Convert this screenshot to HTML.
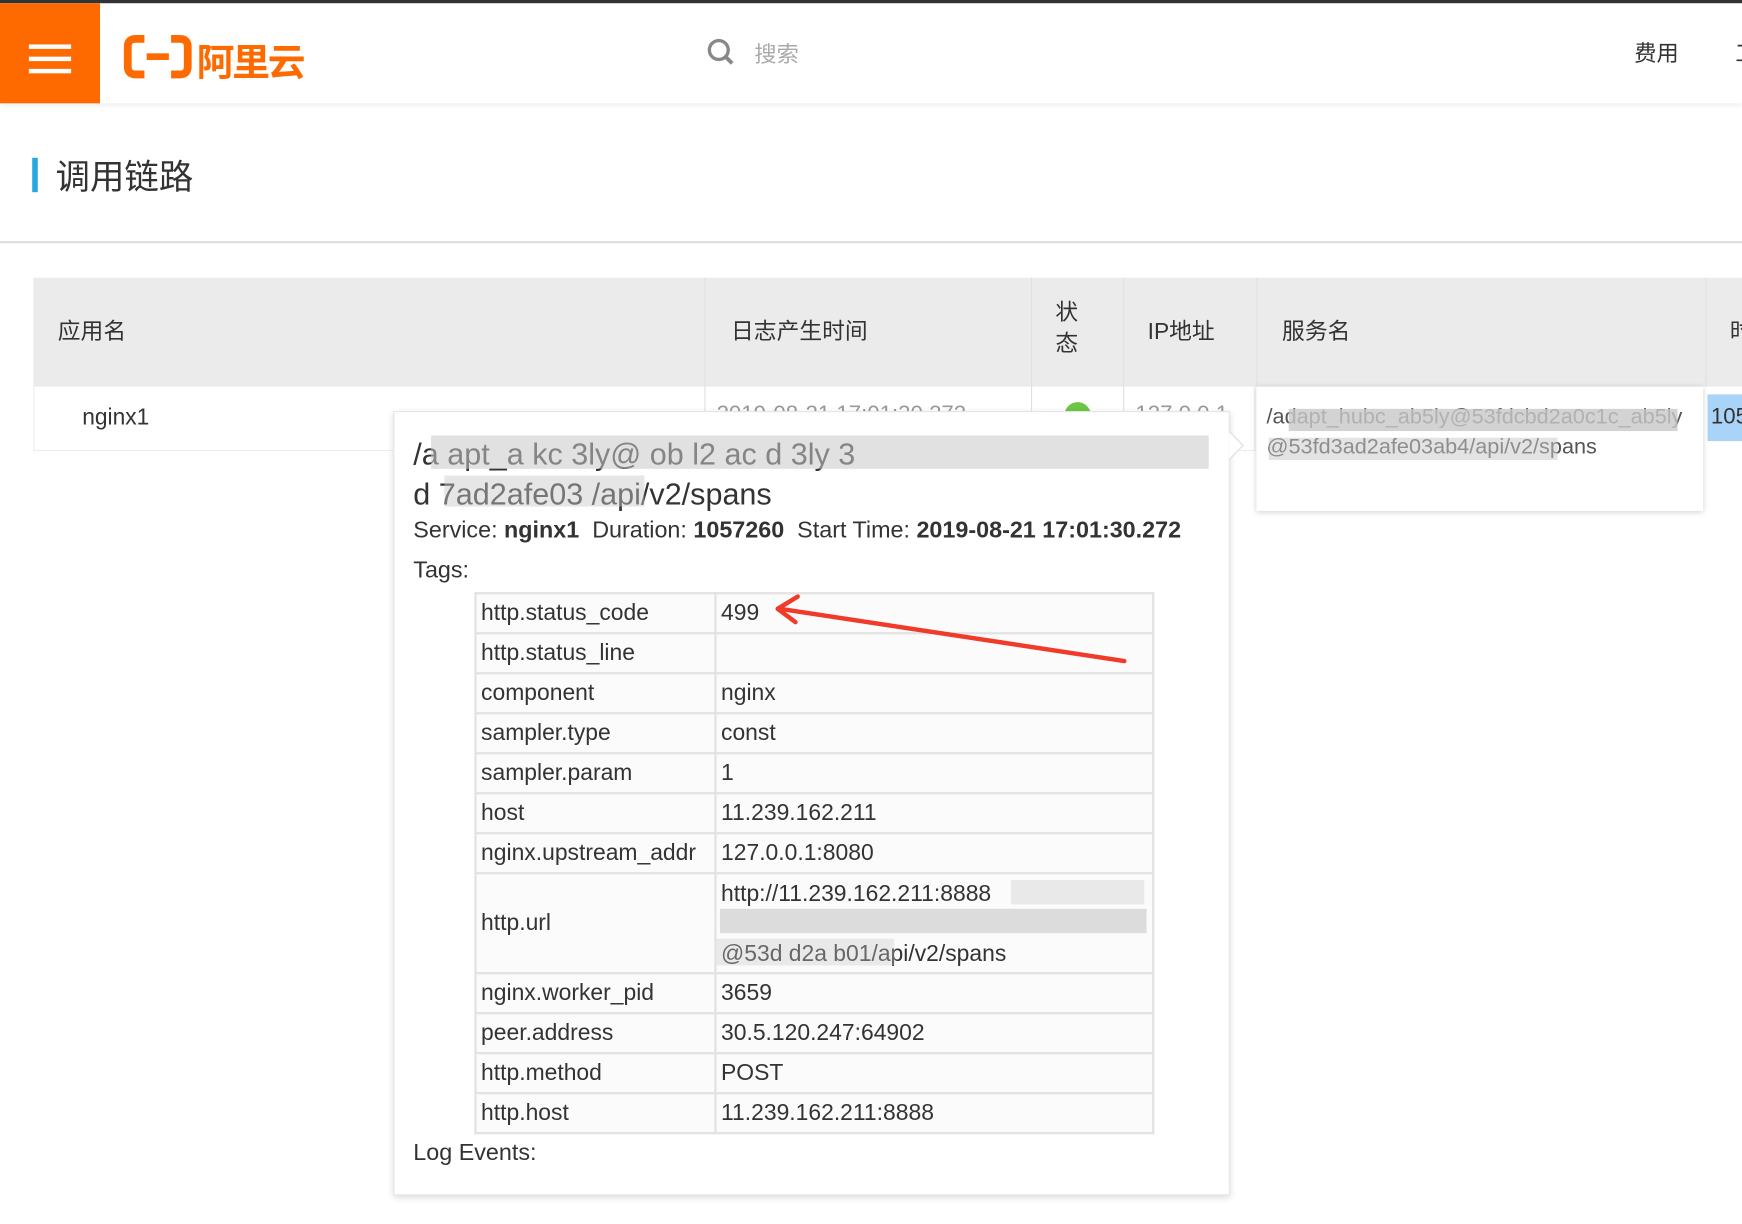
<!DOCTYPE html>
<html><head><meta charset="utf-8"><style>
*{margin:0;padding:0;box-sizing:border-box}
html,body{width:1742px;height:1224px;overflow:hidden;background:#fff}
#w{position:absolute;left:0;top:0;width:1568px;height:1102px;transform:scale(1.11097);transform-origin:0 0;font-family:"Liberation Sans","Noto Sans CJK SC",sans-serif;color:#333}
.a{position:absolute;white-space:nowrap}
.bl{position:absolute;background:#c8c8c8;opacity:.8}
td{border:2px solid #e2e2e2;padding:0 4px;font-size:20.6px;height:36px;background:#fbfbfb;vertical-align:middle}
table{border-collapse:collapse}
</style></head><body><div id="w">
<div class="a" style="left:0;top:0;width:1568px;height:3px;background:#333"></div>
<div class="a" style="left:0;top:3px;width:1568px;height:90px;background:#fff;box-shadow:0 2px 4px rgba(0,0,0,.08)"></div>
<div class="a" style="left:0;top:3px;width:90px;height:90px;background:#ff6a00"></div>
<div class="a" style="left:26px;top:40px;width:38px;height:4px;background:#fff"></div>
<div class="a" style="left:26px;top:51px;width:38px;height:4px;background:#fff"></div>
<div class="a" style="left:26px;top:62px;width:38px;height:4px;background:#fff"></div>
<svg class="a" style="left:110px;top:30px" width="64" height="42" viewBox="0 0 64 42"><path d="M20 5H12Q5 5 5 12V30Q5 37 12 37H20M44 5H52Q59 5 59 12V30Q59 37 52 37H44" fill="none" stroke="#ff6a00" stroke-width="7"/><rect x="22" y="18" width="20" height="6" fill="#ff6a00"/></svg>
<div class="a" style="left:177px;top:29px;font-size:34px;font-weight:bold;color:#ff6a00;letter-spacing:-2px">阿里云</div>
<svg class="a" style="left:636px;top:34px" width="26" height="26" viewBox="0 0 26 26"><circle cx="11" cy="11" r="8.5" fill="none" stroke="#888" stroke-width="3"/><path d="M17 17L23 23" stroke="#888" stroke-width="3.5"/></svg>
<div class="a" style="left:679px;top:33px;font-size:20px;color:#aaa">搜索</div>
<div class="a" style="left:1471px;top:32px;font-size:20px">费用</div>
<div class="a" style="left:1562px;top:32px;font-size:20px">工</div>
<div class="a" style="left:29px;top:142px;width:5px;height:31px;background:#29a7e1"></div>
<div class="a" style="left:50px;top:134px;font-size:31px">调用链路</div>
<div class="a" style="left:0;top:217px;width:1568px;height:2px;background:#ddd"></div>
<div class="a" style="left:30px;top:250px;width:1538px;height:98px;background:#ebebeb"></div>
<div class="a" style="left:634px;top:250px;width:1px;height:156px;background:#e0e0e0"></div>
<div class="a" style="left:928px;top:250px;width:1px;height:156px;background:#e0e0e0"></div>
<div class="a" style="left:1011px;top:250px;width:1px;height:156px;background:#e0e0e0"></div>
<div class="a" style="left:1131px;top:250px;width:1px;height:98px;background:#e0e0e0"></div>
<div class="a" style="left:1535px;top:250px;width:1px;height:98px;background:#e0e0e0"></div>
<div class="a" style="left:52px;top:281px;font-size:20.5px">应用名</div>
<div class="a" style="left:658px;top:281px;font-size:20.5px">日志产生时间</div>
<div class="a" style="left:950px;top:268px;font-size:20.5px;line-height:28px">状<br>态</div>
<div class="a" style="left:1033px;top:281px;font-size:20.5px">IP地址</div>
<div class="a" style="left:1154px;top:281px;font-size:20.5px">服务名</div>
<div class="a" style="left:1557px;top:281px;font-size:20.5px">时</div>
<div class="a" style="left:30px;top:348px;width:1100px;height:58px;border:1px solid #eee;border-top:none"></div>
<div class="a" style="left:74px;top:364px;font-size:20.5px">nginx1</div>
<div class="a" style="left:645px;top:362px;font-size:20px;color:#999">2019-08-21 17:01:30.272</div>
<div class="a" style="left:958px;top:362px;width:24px;height:24px;border-radius:50%;background:#6cc644"></div>
<div class="a" style="left:1022px;top:362px;font-size:20px;color:#999">127.0.0.1</div>
<div class="a" style="left:1537px;top:355px;width:31px;height:42px;background:#a9d3f7;font-size:20px;padding:9px 0 0 3px">105</div>
<div class="a" style="left:1131px;top:348px;width:402px;height:112px;background:#fff;box-shadow:0 1px 5px rgba(0,0,0,.2);font-size:19.5px;line-height:27px;padding:14px 9px;color:#555;white-space:normal;word-break:break-all">/adapt_hubc_ab5ly@53fdcbd2a0c1c_ab5ly@53fd3ad2afe03ab4/api/v2/spans</div>
<div class="bl" style="left:1160px;top:368px;width:350px;height:20px"></div>
<div class="bl" style="left:1142px;top:394px;width:260px;height:20px;opacity:.5"></div>
<div class="a" style="left:354px;top:370px;width:753px;height:706px;background:#fff;border:1px solid #e4e4e4;box-shadow:0 2px 6px rgba(0,0,0,.15)"></div>
<svg class="a" style="left:1106px;top:388px" width="16" height="26"><path d="M0 0L13 13L0 26" fill="#fff" stroke="#ddd"/></svg>
<div class="a" style="left:372px;top:391px;font-size:27.5px;line-height:36px;color:#333">/a  apt_a  kc   3ly@   ob  l2         ac   d   3ly   3<br>d 7ad2afe03    /api/v2/spans</div>
<div class="bl" style="left:388px;top:392px;width:700px;height:30px;opacity:.55"></div>
<div class="bl" style="left:400px;top:428px;width:180px;height:28px;opacity:.45"></div>
<div class="a" style="left:372px;top:466px;font-size:21px">Service: <b>nginx1</b>&nbsp; Duration: <b>1057260</b>&nbsp; Start Time: <b>2019-08-21 17:01:30.272</b></div>
<div class="a" style="left:372px;top:502px;font-size:21px">Tags:</div>
<table class="a" style="left:427px;top:533px;width:612px">
<tr><td style="width:216px">http.status_code</td><td>499</td></tr>
<tr><td>http.status_line</td><td></td></tr>
<tr><td>component</td><td>nginx</td></tr>
<tr><td>sampler.type</td><td>const</td></tr>
<tr><td>sampler.param</td><td>1</td></tr>
<tr><td>host</td><td>11.239.162.211</td></tr>
<tr><td>nginx.upstream_addr</td><td>127.0.0.1:8080</td></tr>
<tr><td style="height:90px">http.url</td><td style="line-height:27px">http://11.239.162.211:8888<br>&nbsp;<br>@53d    d2a  b01/api/v2/spans</td></tr>
<tr><td>nginx.worker_pid</td><td>3659</td></tr>
<tr><td>peer.address</td><td>30.5.120.247:64902</td></tr>
<tr><td>http.method</td><td>POST</td></tr>
<tr><td>http.host</td><td>11.239.162.211:8888</td></tr>
</table>
<div class="bl" style="left:648px;top:818px;width:384px;height:22px;opacity:.6"></div>
<div class="bl" style="left:910px;top:792px;width:120px;height:22px;opacity:.35"></div>
<div class="bl" style="left:645px;top:845px;width:160px;height:24px;opacity:.35"></div>
<div class="a" style="left:372px;top:1026px;font-size:21px">Log Events:</div>
<svg class="a" style="left:0;top:0" width="1568" height="1102"><path d="M1012 595L702 548" stroke="#f03a2a" stroke-width="4" stroke-linecap="round"/><path d="M718 537L700 548L716 560" fill="none" stroke="#f03a2a" stroke-width="4" stroke-linecap="round" stroke-linejoin="round"/></svg>
</div></body></html>
